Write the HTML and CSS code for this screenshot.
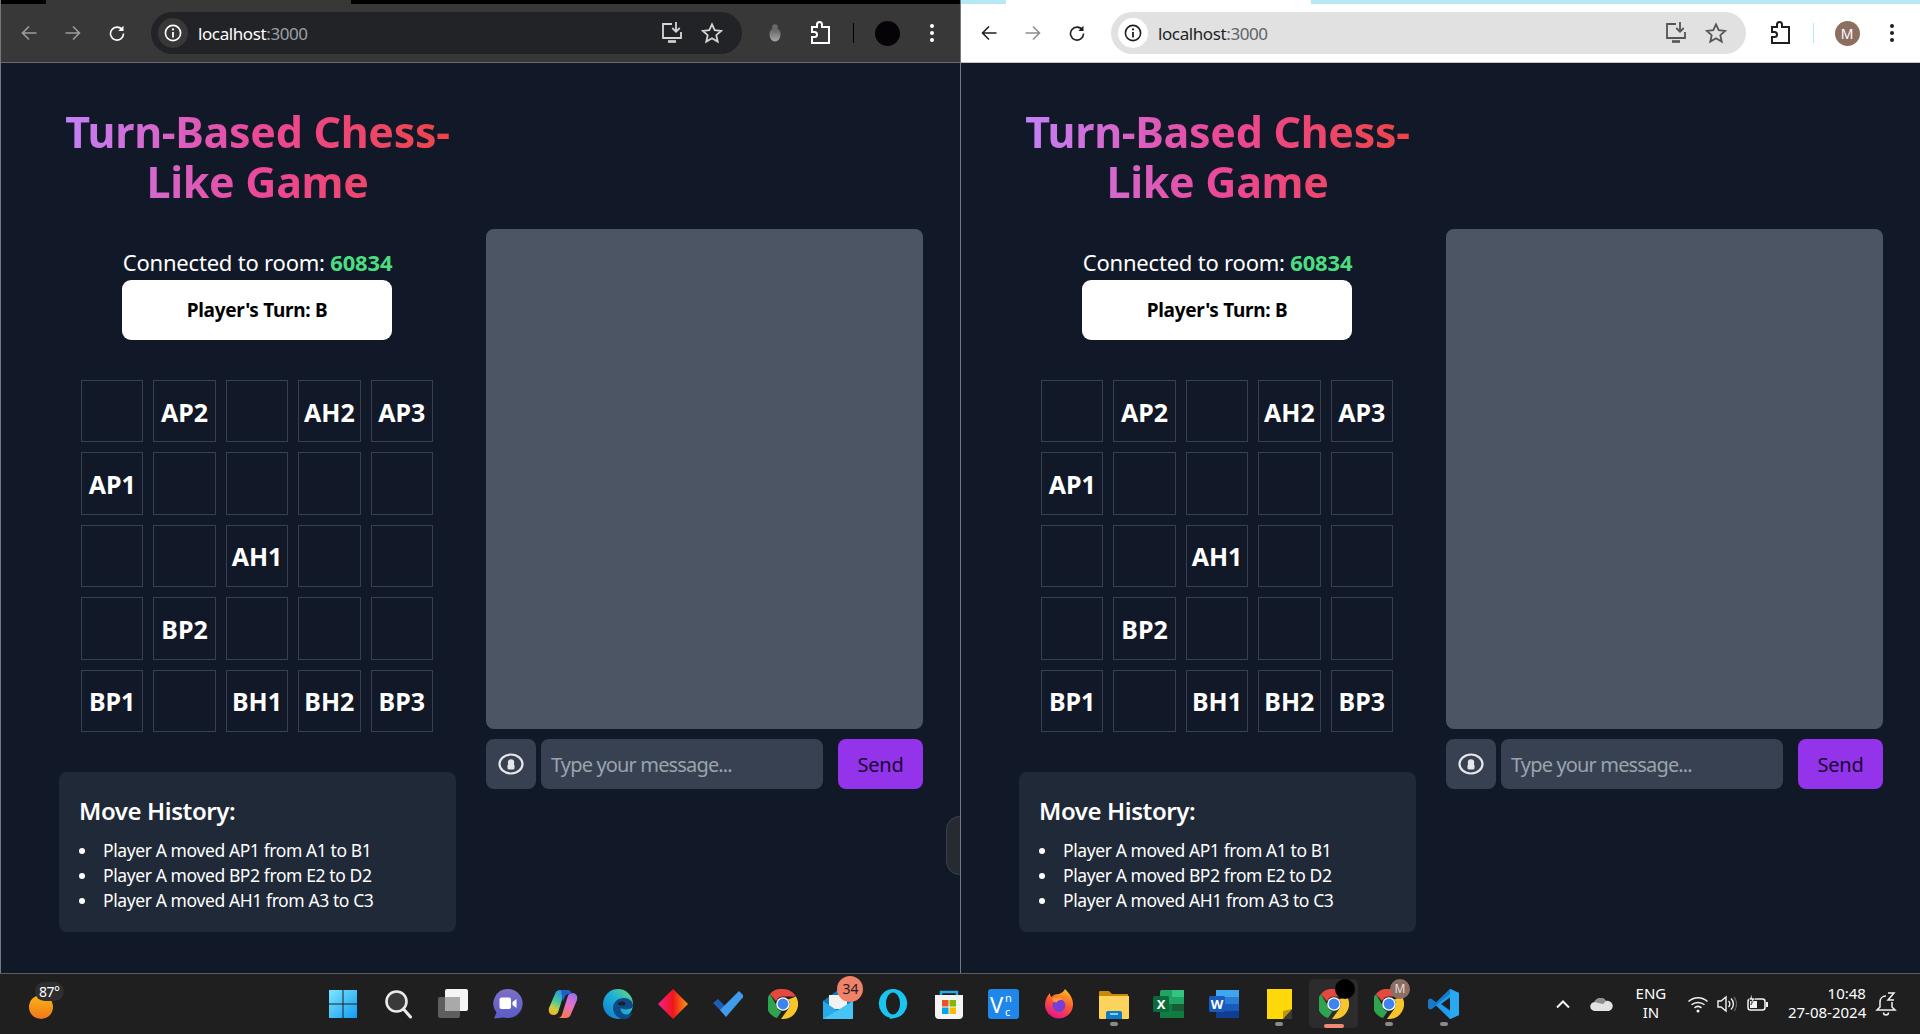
FILE: index.html
```html
<!DOCTYPE html>
<html lang="en">
<head>
  <meta charset="UTF-8">
  <title>Turn-Based Chess-Like Game</title>
  <link rel="stylesheet" href="styles.css">
</head>
<body>

<!-- shared icons -->
<svg class="sprite" width="0" height="0">
  <defs>
    <symbol id="i-back" viewBox="0 0 16 16"><path d="M15.5 8H1.5M8 1.5L1.5 8 8 14.5" fill="none" stroke="currentColor" stroke-width="1.6"/></symbol>
    <symbol id="i-forward" viewBox="0 0 16 16"><path d="M.5 8h14M8 1.5L14.500 8 8 14.500" fill="none" stroke="currentColor" stroke-width="1.6"/></symbol>
    <symbol id="i-reload" viewBox="0 0 16 16"><path d="M13.400 5A6.500 6.500 0 1 0 14.500 8.500" fill="none" stroke="currentColor" stroke-width="1.6"/><path d="M14.500 .8V6H9.300z" fill="currentColor"/></symbol>
    <symbol id="i-info" viewBox="0 0 20 20"><circle cx="10" cy="10" r="7.600" fill="none" stroke="currentColor" stroke-width="1.600"/><path d="M10 9v5.500" stroke="currentColor" stroke-width="1.800"/><circle cx="10" cy="6.400" r="1.100" fill="currentColor"/></symbol>
    <symbol id="i-install" viewBox="0 0 22 24"><path d="M11 3H2v14h18v-6" fill="none" stroke="currentColor" stroke-width="1.800"/><path d="M7 20.500h8" stroke="currentColor" stroke-width="2.600"/><path d="M15 1v9M11.300 7l3.700 3.800L18.700 7" fill="none" stroke="currentColor" stroke-width="1.800"/></symbol>
    <symbol id="i-star" viewBox="0 0 22 22"><path d="M11 2.300l2.700 5.900 6.400.7-4.800 4.300 1.400 6.400-5.700-3.300-5.700 3.300 1.400-6.400L1.900 8.900l6.400-.7z" fill="none" stroke="currentColor" stroke-width="1.800"/></symbol>
    <symbol id="i-ext" viewBox="-1 0 22 26"><path d="M2 7h5V4.500a2.500 2.500 0 0 1 5 0V7h7v16H2v-6h2.500a2.500 2.500 0 0 0 0-5H2z" fill="none" stroke="currentColor" stroke-width="2"/></symbol>
    <symbol id="i-menu" viewBox="0 0 6 20"><circle cx="3" cy="3" r="2"/><circle cx="3" cy="10" r="2"/><circle cx="3" cy="17" r="2"/></symbol>
    <symbol id="i-chrome" viewBox="0 0 30 30">
      <path d="M15 0a15 15 0 0 1 13 7.500H15a7.500 7.500 0 0 0-7 4.800L2 4.900A15 15 0 0 1 15 0z" fill="#e5483d"/>
      <path d="M2 4.900l6.400 11.400a7.500 7.500 0 0 0 5 6.100L9 29A15 15 0 0 1 2 4.900z" fill="#2fa44f"/>
      <path d="M28 7.500A15 15 0 0 1 15 30h-2l6.800-9.500a7.500 7.500 0 0 0 .4-10z" fill="#f8c52b"/>
      <circle cx="15" cy="15" r="6.800" fill="#fff"/><circle cx="15" cy="15" r="5.400" fill="#3d84ee"/>
    </symbol>
  </defs>
</svg>

<div class="desktop">

  <!-- left window (dark chrome theme) -->
  <section class="window dark">
    <div class="tabstrip"><div class="tab"></div></div>
    <div class="toolbar">
      <button class="tool-btn dim"><svg width="16" height="16"><use href="#i-back"/></svg></button>
      <button class="tool-btn dim"><svg width="16" height="16"><use href="#i-forward"/></svg></button>
      <button class="tool-btn"><svg width="16" height="16"><use href="#i-reload"/></svg></button>
      <div class="omnibox">
        <span class="info-chip"><svg width="20" height="20"><use href="#i-info"/></svg></span>
        <span class="url">localhost<span class="url-port">:3000</span></span>
        <span class="omni-icons">
          <svg width="22" height="24"><use href="#i-install"/></svg>
          <svg width="22" height="22"><use href="#i-star"/></svg>
        </span>
      </div>
      <button class="tool-btn bug-btn"><svg width="14" height="18" viewBox="0 0 14 18"><defs><linearGradient id="bug" x1="0" y1="0" x2="0" y2="1"><stop offset="0" stop-color="#5a5a5a"/><stop offset="1" stop-color="#a8a8a8"/></linearGradient></defs><ellipse cx="7" cy="10.500" rx="5.500" ry="7" fill="url(#bug)"/><circle cx="7" cy="3" r="2.800" fill="#6a6a6a"/></svg></button>
      <button class="tool-btn"><svg width="22" height="26"><use href="#i-ext"/></svg></button>
      <span class="divider"></span>
      <button class="tool-btn avatar-btn"><span class="avatar"></span></button>
      <button class="tool-btn"><svg class="menu-icon" width="6" height="20"><use href="#i-menu"/></svg></button>
    </div>
    <div class="page">
      <div class="game-col">
        <h1 class="title">Turn-Based Chess-Like Game</h1>
        <p class="room">Connected to room: <strong>60834</strong></p>
        <div class="turn">Player's Turn: B</div>
        <div class="board">
          <div class="cell"></div><div class="cell">AP2</div><div class="cell"></div><div class="cell">AH2</div><div class="cell">AP3</div>
          <div class="cell">AP1</div><div class="cell"></div><div class="cell"></div><div class="cell"></div><div class="cell"></div>
          <div class="cell"></div><div class="cell"></div><div class="cell">AH1</div><div class="cell"></div><div class="cell"></div>
          <div class="cell"></div><div class="cell">BP2</div><div class="cell"></div><div class="cell"></div><div class="cell"></div>
          <div class="cell">BP1</div><div class="cell"></div><div class="cell">BH1</div><div class="cell">BH2</div><div class="cell">BP3</div>
        </div>
        <div class="history">
          <h2>Move History:</h2>
          <ul>
            <li>Player A moved AP1 from A1 to B1</li>
            <li>Player A moved BP2 from E2 to D2</li>
            <li>Player A moved AH1 from A3 to C3</li>
          </ul>
        </div>
      </div>
      <div class="chat-col">
        <div class="chat-box"></div>
        <div class="chat-form">
          <button class="eye-btn"><svg width="26" height="22" viewBox="0 0 26 22"><ellipse cx="13" cy="11" rx="11.500" ry="9.500" fill="none" stroke="#e5e7eb" stroke-width="2.200"/><circle cx="13" cy="9.500" r="3.200" fill="#e5e7eb"/><rect x="9.500" y="11" width="7" height="5.500" rx="1.500" fill="#e5e7eb"/></svg></button>
          <input class="chat-input" type="text" placeholder="Type your message...">
          <button class="send-btn">Send</button>
        </div>
      </div>
    </div>
    <div class="side-handle"></div>
  </section>

  <!-- right window (light chrome theme) -->
  <section class="window light">
    <div class="tabstrip"><div class="tab"></div></div>
    <div class="toolbar">
      <button class="tool-btn"><svg width="16" height="16"><use href="#i-back"/></svg></button>
      <button class="tool-btn dim"><svg width="16" height="16"><use href="#i-forward"/></svg></button>
      <button class="tool-btn"><svg width="16" height="16"><use href="#i-reload"/></svg></button>
      <div class="omnibox">
        <span class="info-chip"><svg width="20" height="20"><use href="#i-info"/></svg></span>
        <span class="url">localhost<span class="url-port">:3000</span></span>
        <span class="omni-icons">
          <svg width="22" height="24"><use href="#i-install"/></svg>
          <svg width="22" height="22"><use href="#i-star"/></svg>
        </span>
      </div>
      <button class="tool-btn"><svg width="22" height="26"><use href="#i-ext"/></svg></button>
      <span class="divider"></span>
      <button class="tool-btn avatar-btn"><span class="avatar">M</span></button>
      <button class="tool-btn"><svg class="menu-icon" width="6" height="20"><use href="#i-menu"/></svg></button>
    </div>
    <div class="page">
      <div class="game-col">
        <h1 class="title">Turn-Based Chess-Like Game</h1>
        <p class="room">Connected to room: <strong>60834</strong></p>
        <div class="turn">Player's Turn: B</div>
        <div class="board">
          <div class="cell"></div><div class="cell">AP2</div><div class="cell"></div><div class="cell">AH2</div><div class="cell">AP3</div>
          <div class="cell">AP1</div><div class="cell"></div><div class="cell"></div><div class="cell"></div><div class="cell"></div>
          <div class="cell"></div><div class="cell"></div><div class="cell">AH1</div><div class="cell"></div><div class="cell"></div>
          <div class="cell"></div><div class="cell">BP2</div><div class="cell"></div><div class="cell"></div><div class="cell"></div>
          <div class="cell">BP1</div><div class="cell"></div><div class="cell">BH1</div><div class="cell">BH2</div><div class="cell">BP3</div>
        </div>
        <div class="history">
          <h2>Move History:</h2>
          <ul>
            <li>Player A moved AP1 from A1 to B1</li>
            <li>Player A moved BP2 from E2 to D2</li>
            <li>Player A moved AH1 from A3 to C3</li>
          </ul>
        </div>
      </div>
      <div class="chat-col">
        <div class="chat-box"></div>
        <div class="chat-form">
          <button class="eye-btn"><svg width="26" height="22" viewBox="0 0 26 22"><ellipse cx="13" cy="11" rx="11.500" ry="9.500" fill="none" stroke="#e5e7eb" stroke-width="2.200"/><circle cx="13" cy="9.500" r="3.200" fill="#e5e7eb"/><rect x="9.500" y="11" width="7" height="5.500" rx="1.500" fill="#e5e7eb"/></svg></button>
          <input class="chat-input" type="text" placeholder="Type your message...">
          <button class="send-btn">Send</button>
        </div>
      </div>
    </div>
  </section>
</div>

<footer class="taskbar">
  <div class="weather">
    <svg width="24" height="24" viewBox="0 0 24 24"><defs><linearGradient id="sun" x1="0" y1="0" x2="0" y2="1"><stop offset="0" stop-color="#fbb516"/><stop offset="1" stop-color="#f0761a"/></linearGradient></defs><circle cx="12" cy="12" r="12" fill="url(#sun)"/></svg>
    <span class="temp">87°</span>
  </div>

  <div class="apps">
    <!-- start -->
    <div class="app"><svg width="30" height="30" viewBox="0 0 30 30"><defs><linearGradient id="win" x1="0" y1="0" x2="1" y2="1"><stop offset="0" stop-color="#7fe6fb"/><stop offset="1" stop-color="#0f9cf5"/></linearGradient></defs><path d="M1 1h13.500v13.500H1zM15.500 1H29v13.500H15.500zM1 15.500h13.500V29H1zM15.500 15.500H29V29H15.500z" fill="url(#win)"/></svg></div>
    <!-- search -->
    <div class="app"><svg width="30" height="30" viewBox="0 0 30 30"><circle cx="13.500" cy="12.500" r="10" fill="#3a3a3a" stroke="#eaeaea" stroke-width="2.600"/><path d="M20.500 20l7 8" stroke="#eaeaea" stroke-width="3" stroke-linecap="round"/></svg></div>
    <!-- task view -->
    <div class="app"><svg width="30" height="30" viewBox="0 0 30 30"><rect x="0" y="8" width="22" height="21" rx="2" fill="#5e5e5e"/><rect x="7" y="0" width="23" height="22" rx="2" fill="#f4f4f4"/><rect x="7" y="8" width="15" height="14" fill="#a9a9a9"/></svg></div>
    <!-- meet -->
    <div class="app"><svg width="30" height="30" viewBox="0 0 30 30"><defs><linearGradient id="meet" x1="0" y1="0" x2="0" y2="1"><stop offset="0" stop-color="#7d6fc4"/><stop offset="1" stop-color="#5a5cc8"/></linearGradient></defs><path d="M15 0a14.500 14.500 0 1 1-4 28.400L1 29.500l2.500-6A14.500 14.500 0 0 1 15 0z" fill="url(#meet)"/><rect x="6.500" y="8.500" width="11.500" height="11.500" rx="2" fill="#fff"/><path d="M19.500 13l4-3v9l-4-3z" fill="#fff"/></svg></div>
    <!-- copilot -->
    <div class="app"><svg width="30" height="30" viewBox="0 0 30 30"><defs><linearGradient id="cop1" x1=".6" y1="0" x2=".2" y2="1"><stop offset="0" stop-color="#2a8fe8"/><stop offset=".45" stop-color="#46c8a0"/><stop offset=".75" stop-color="#c8d040"/><stop offset="1" stop-color="#f8b020"/></linearGradient><linearGradient id="cop2" x1=".6" y1="0" x2=".2" y2="1"><stop offset="0" stop-color="#f57a50"/><stop offset=".5" stop-color="#e870c8"/><stop offset="1" stop-color="#9a70f0"/></linearGradient></defs><path d="M12 1h8c-2.500 0-3.500 2-4.200 4L10.500 22c-.7 2.500-2.500 4-5 4C2 26 0 23 1 19L7 5c.8-2.500 2.500-4 5-4z" fill="url(#cop1)"/><path d="M12 1h8c-2.500 0-3.500 2-4.200 4L10.500 22c-.7 2.500-2.500 4-5 4C2 26 0 23 1 19L7 5c.8-2.500 2.500-4 5-4z" fill="url(#cop2)" transform="rotate(180 15 15)"/><path d="M13 1h7c2 0 3.500 2 4 4h-3c-3 0-4 2-5 5l-1 2.500z" fill="#1f5fc8"/></svg></div>
    <!-- edge -->
    <div class="app"><svg width="30" height="30" viewBox="0 0 30 30"><defs><linearGradient id="edge" x1="1" y1="0" x2="0" y2="1"><stop offset="0" stop-color="#6fdc6a"/><stop offset=".45" stop-color="#1fb0d8"/><stop offset="1" stop-color="#0f78c8"/></linearGradient></defs><circle cx="15" cy="15" r="15" fill="url(#edge)"/><path d="M30 17c0-5-4-8-9-8-6 0-11 4-11 10 0 6 5 11 11 11 4 0 7-2 8-6-3 2-7 2-9 .500-2-1.500-3-3.500-2-5.500 2 1.500 5 1.800 8 1 2-.5 4-1.500 4-3z" fill="#0d4a8a"/><path d="M19 12.500c2.500 0 4 1.200 3.500 2.800-.5 1-2.500 1.400-4.500 1.200-2-.2-3-1-3-2 0-1.200 2-2 4-2z" fill="#1f1f1f"/></svg></div>
    <!-- diamond app -->
    <div class="app"><svg width="30" height="30" viewBox="0 0 30 30"><defs><linearGradient id="dia" x1="0" y1="0" x2="1" y2="0"><stop offset="0" stop-color="#f5208e"/><stop offset=".5" stop-color="#f0151a"/><stop offset="1" stop-color="#fa9a10"/></linearGradient></defs><path d="M15 0l15 15-15 15L0 15z" fill="url(#dia)"/></svg></div>
    <!-- to do -->
    <div class="app"><svg width="30" height="30" viewBox="0 0 30 30"><path d="M0 14l5-4 9 9-4 5z" fill="#1c5fb8"/><path d="M26 2l5 5-18 21-6-7z" fill="#3f9bec"/></svg></div>
    <!-- chrome -->
    <div class="app"><svg width="30" height="30"><use href="#i-chrome"/></svg></div>
    <!-- mail -->
    <div class="app"><svg width="30" height="30" viewBox="0 0 30 30"><path d="M0 12L15 1l15 11v18H0z" fill="#0f75bd"/><path d="M6 6h18v14H6z" fill="#f2f2f2"/><path d="M0 12l15 10 15-10v18H0z" fill="#2aa9ea"/><path d="M30 12v18H0z" fill="#45c4f5"/></svg><span class="badge">34</span></div>
    <!-- alexa -->
    <div class="app"><svg width="30" height="30" viewBox="0 0 30 30"><path fill-rule="evenodd" d="M15 0a14 14.500 0 0 1 3 28.700L12 30v-1.300A14 14.500 0 0 1 15 0zm0 3.500c-4 0-7 5-7 11s3 11 7 11 7-5 7-11-3-11-7-11z" fill="#19c4f0"/></svg></div>
    <!-- store -->
    <div class="app"><svg width="30" height="30" viewBox="0 0 30 30"><path d="M7 8V3h16v5" fill="none" stroke="#2aa9ea" stroke-width="2.400"/><path d="M1 6h28v20a4 4 0 0 1-4 4H5a4 4 0 0 1-4-4z" fill="#f4f4f4"/><rect x="8" y="11" width="6.500" height="6.500" fill="#f25022"/><rect x="15.500" y="11" width="6.500" height="6.500" fill="#7fba00"/><rect x="8" y="18.500" width="6.500" height="6.500" fill="#00a4ef"/><rect x="15.500" y="18.500" width="6.500" height="6.500" fill="#ffb900"/></svg></div>
    <!-- vnc -->
    <div class="app"><svg width="31" height="30" viewBox="0 0 31 30"><rect width="31" height="30" rx="3" fill="#1f86ea"/><text x="2" y="24" class="vnc-v">V</text><text x="17" y="12.500" class="vnc-s">n</text><text x="17" y="27" class="vnc-s">c</text></svg></div>
    <!-- firefox -->
    <div class="app"><svg width="30" height="30" viewBox="0 0 30 30"><defs><linearGradient id="fx" x1=".8" y1="0" x2=".4" y2="1"><stop offset="0" stop-color="#ffc21f"/><stop offset=".5" stop-color="#ff5a2d"/><stop offset="1" stop-color="#e31587"/></linearGradient></defs><path d="M15 5c3-1 5-3 6-5 3 3 8 8 8 15a14 14 0 0 1-28 1C1 11 3 7 6 4c0 2 .5 3 1.500 4 1.500-2 4-3 7.500-3z" fill="url(#fx)"/><circle cx="15" cy="16.500" r="6.500" fill="#7a3ed8"/><path d="M8 10c3-2 8-2 11 1-3-.5-5 .500-6.500 2.500-2 0-4-1.500-4.500-3.500z" fill="#ff9a3c"/></svg></div>
    <!-- explorer -->
    <div class="app running"><svg width="30" height="30" viewBox="0 0 30 30"><path d="M0 3a1 1 0 0 1 1-1h9l3 3h16v5H0z" fill="#c98a0c"/><path d="M0 7h30v22a1 1 0 0 1-1 1H1a1 1 0 0 1-1-1z" fill="#fcd35b"/><path d="M7 24a2 2 0 0 1 2-2h12a2 2 0 0 1 2 2v6H7z" fill="#0f7ac8"/><rect x="11" y="24" width="8" height="2" fill="#7fd0f5"/></svg></div>
    <!-- excel -->
    <div class="app"><svg width="31" height="30" viewBox="0 0 31 30"><rect x="7" y="1" width="24" height="28" rx="1.500" fill="#21a366"/><rect x="19" y="1" width="12" height="7" fill="#33c481"/><rect x="7" y="15" width="24" height="14" fill="#107c41"/><rect x="19" y="15" width="12" height="7" fill="#185c37"/><rect y="7" width="16" height="16" rx="1.500" fill="#0b6a3a"/><text x="8" y="20" class="tile-letter">X</text></svg></div>
    <!-- word -->
    <div class="app"><svg width="30" height="30" viewBox="0 0 30 30"><rect x="7" y="1" width="23" height="28" rx="1.500" fill="#2b7cd3"/><rect x="7" y="1" width="23" height="7" fill="#41a5ee"/><rect x="7" y="15" width="23" height="7" fill="#185abd"/><rect x="7" y="22" width="23" height="7" fill="#103f91"/><rect y="7" width="16" height="16" rx="1.500" fill="#185abd"/><text x="8" y="20" class="tile-letter">W</text></svg></div>
    <!-- sticky notes -->
    <div class="app running"><svg width="30" height="30" viewBox="0 0 30 30"><path d="M3 0h25v20l-9 10H3z" fill="#ffd80a"/><path d="M28 20v10H19z" fill="#3a3a3a"/><path d="M19 30v-8l9-2z" fill="#b89a08"/></svg></div>
    <!-- chrome, focused window -->
    <div class="app running active"><svg width="30" height="30"><use href="#i-chrome"/></svg><span class="profile black"></span></div>
    <!-- chrome, second profile -->
    <div class="app running"><svg width="30" height="30"><use href="#i-chrome"/></svg><span class="profile">M</span></div>
    <!-- vs code -->
    <div class="app running"><svg width="31" height="30" viewBox="0 0 31 30"><path d="M22 0l9 4v22l-9 4L8 16.500l-5 4-3-1.500V11l3-1.500 5 4zm0 8.500L13 15l9 6.500z" fill="#1f9cf0"/><path d="M22 0l9 4v22l-9 4z" fill="#29a9f2"/><path d="M0 19l3 1.500L22 5V0L8 13.500 3 9.500 0 11z" fill="#0f6cb8" opacity=".7"/></svg></div>
  </div>

  <div class="tray">
    <svg class="tray-chevron" width="20" height="12" viewBox="0 0 20 12"><path d="M4 9.500l6-6 6 6" fill="none" stroke="#f2f2f2" stroke-width="2"/></svg>
    <svg class="tray-cloud" width="24" height="14" viewBox="0 0 24 14"><path d="M5 14a4.500 4.500 0 0 1-.5-9A6.500 6.500 0 0 1 16 4a5 5 0 0 1 3 10z" fill="#e2e2e2"/><path d="M4.500 5A6.500 6.500 0 0 1 16 4l-3 3c-3-1-6-1-8.500-2z" fill="#8f8f8f"/></svg>
    <div class="lang">ENG<br>IN</div>
    <svg class="tray-wifi" width="22" height="18" viewBox="0 0 22 18"><path d="M1.500 6.500a14 14 0 0 1 19 0M4.500 9.800a10 10 0 0 1 13 0M7.500 12.800a5.500 5.500 0 0 1 7 0" fill="none" stroke="#f2f2f2" stroke-width="1.500"/><circle cx="11" cy="16" r="1.500" fill="#f2f2f2"/></svg>
    <svg class="tray-vol" width="20" height="18" viewBox="0 0 20 18"><path d="M1 6h3l5-4v14l-5-4H1z" fill="none" stroke="#f2f2f2" stroke-width="1.400"/><path d="M11.500 6a4 4 0 0 1 0 6M14 3.500a7.500 7.500 0 0 1 0 11" fill="none" stroke="#f2f2f2" stroke-width="1.400"/><path d="M17 2a11 11 0 0 1 0 14" fill="none" stroke="#666" stroke-width="1.200"/></svg>
    <svg class="tray-batt" width="22" height="20" viewBox="0 0 22 20"><rect x="1" y="5" width="17" height="11" rx="2.500" fill="none" stroke="#f2f2f2" stroke-width="1.500"/><rect x="19" y="8" width="2" height="5" fill="#f2f2f2"/><rect x="3" y="7" width="7" height="7" fill="#f2f2f2"/><path d="M5 0L2 6h3l-1 5 4-7H5z" fill="#f2f2f2" stroke="#1f1f1f" stroke-width=".6"/></svg>
    <div class="clock">10:48<br>27-08-2024</div>
    <svg class="tray-bell" width="22" height="24" viewBox="0 0 22 24"><path d="M11 4c-4 0-6 3-6 6v5l-3 3h18l-3-3V10" fill="none" stroke="#f2f2f2" stroke-width="1.500"/><path d="M8.500 20.500a2.500 2.500 0 0 0 5 0" fill="none" stroke="#f2f2f2" stroke-width="1.500"/><path d="M13 1h6l-6 7h6" fill="none" stroke="#f2f2f2" stroke-width="1.500"/></svg>
  </div>
</footer>

</body>
</html>
```

FILE: styles.css
```css
* {
  box-sizing: border-box;
}
body {
  margin: 0;
  height: 1034px;
  overflow: hidden;
  display: flex;
  flex-direction: column;
  font-family: "Noto Sans", sans-serif;
  background-color: #111827;
}
button {
  font-family: inherit;
  border: none;
  padding: 0;
  background: none;
}
.sprite {
  position: absolute;
}
.desktop {
  display: flex;
  height: 973px;
}

/* browser window */
.window {
  position: relative;
  width: 960px;
  display: flex;
  flex-direction: column;
  border-left: 1px solid #74777c;
  background-color: #111827;
}
.tabstrip {
  height: 4px;
  display: flex;
}
.tab {
  width: 305px;
  margin-left: 45px;
}
.toolbar {
  height: 59px;
  display: flex;
  align-items: center;
  padding: 0 6px 0 6px;
  border-bottom: 1px solid;
}
.tool-btn {
  width: 44px;
  height: 44px;
  flex: none;
  display: flex;
  align-items: center;
  justify-content: center;
  color: inherit;
}
.tool-btn.dim {
  opacity: 0.5;
}
.avatar-btn {
  margin-right: 1px;
}
.omnibox {
  flex: 1;
  height: 42px;
  margin: 0 12px;
  border-radius: 21px;
  display: flex;
  align-items: center;
  padding: 0 19px 0 7px;
}
.bug-btn {
  margin: 0 1px 0 -1px;
}
.info-chip {
  width: 30px;
  height: 30px;
  border-radius: 50%;
  display: flex;
  align-items: center;
  justify-content: center;
}
.url {
  margin-left: 10px;
  font-size: 17px;
  letter-spacing: -0.4px;
}
.omni-icons {
  margin-left: auto;
  display: flex;
  align-items: center;
  gap: 18px;
}
.divider {
  width: 1px;
  height: 20px;
  margin: 0 11px;
}
.avatar {
  width: 25px;
  height: 25px;
  border-radius: 50%;
  display: flex;
  align-items: center;
  justify-content: center;
  font-size: 14px;
  color: #fff;
}
.menu-icon {
  fill: currentColor;
}

.dark .tabstrip {
  background-color: #000;
}
.dark .tab,
.dark .toolbar {
  background-color: #383838;
}
.dark .toolbar {
  color: #fff;
  border-bottom-color: #6b6b6b;
}
.dark .omnibox {
  background-color: #222326;
}
.dark .info-chip {
  background-color: #383838;
}
.dark .url {
  color: #fff;
}
.dark .url-port {
  color: #9aa0a6;
}
.dark .omni-icons {
  color: #d6d6d6;
}
.dark .divider {
  background-color: #000;
}
.dark .avatar {
  background-color: #050308;
}

.light .tabstrip {
  background-color: #b7e8f5;
}
.light .tab,
.light .toolbar {
  background-color: #fff;
}
.light .toolbar {
  color: #1f1f1f;
  border-bottom-color: #c4c7c5;
}
.light .omnibox {
  background-color: #e1e1e1;
}
.light .info-chip {
  background-color: #fff;
}
.light .url {
  color: #1f1f1f;
}
.light .url-port {
  color: #5f6368;
}
.light .omni-icons {
  color: #555;
}
.light .divider {
  background-color: #b7e8f5;
}
.light .avatar {
  background-color: #8d6e63;
}

/* game page */
.page {
  flex: 1;
  display: flex;
  gap: 30px;
  padding: 45px 0 0 58px;
}
.game-col {
  width: 397px;
  display: flex;
  flex-direction: column;
  align-items: center;
}
.title {
  margin: -1px 0 40px;
  width: 100%;
  font-size: 43px;
  line-height: 50px;
  font-weight: 700;
  letter-spacing: -0.3px;
  text-align: center;
  color: transparent;
  background: linear-gradient(to right, #c084fc, #ec4899, #ef4444);
  -webkit-background-clip: text;
  background-clip: text;
}
.room {
  margin: 0;
  padding-bottom: 3px;
  font-size: 22px;
  line-height: 30px;
  letter-spacing: -0.2px;
  color: #fff;
}
.room strong {
  color: #4ade80;
  font-weight: 700;
}
.turn {
  width: 270px;
  height: 60px;
  margin-right: 1px;
  border-radius: 9px;
  background-color: #fff;
  color: #000;
  font-size: 19px;
  font-weight: 700;
  letter-spacing: -0.3px;
  display: flex;
  align-items: center;
  justify-content: center;
}
.board {
  margin: 40px 1px 0 0;
  width: 352px;
  display: grid;
  grid-template-columns: repeat(5, 1fr);
  grid-auto-rows: 62.4px;
  gap: 10px;
}
.cell {
  border: 1px solid #374151;
  padding-top: 1px;
  display: flex;
  align-items: center;
  justify-content: center;
  color: #fff;
  font-size: 25px;
  font-weight: 700;
}
.history {
  margin-top: 40px;
  width: 100%;
  height: 160px;
  padding: 23px 20px 0;
  border-radius: 8px;
  background-color: #1f2937;
  color: #fff;
}
.history h2 {
  margin: 0 0 11px;
  font-size: 24px;
  line-height: 32px;
  font-weight: 600;
  letter-spacing: -0.4px;
}
.history ul {
  margin: 0;
  padding-left: 24px;
  list-style: none;
}
.history li {
  position: relative;
  font-size: 17.5px;
  line-height: 25px;
  letter-spacing: -0.4px;
}
.history li::before {
  content: "";
  position: absolute;
  left: -24px;
  top: 10px;
  width: 6px;
  height: 6px;
  border-radius: 50%;
  background-color: #fff;
}

/* chat */
.chat-col {
  width: 437px;
  padding-top: 121px;
}
.chat-box {
  height: 500px;
  border-radius: 8px;
  background-color: #4b5563;
}
.chat-form {
  margin-top: 10px;
  height: 50px;
  display: flex;
}
.eye-btn {
  width: 50px;
  border-radius: 8px;
  background-color: #374151;
  display: flex;
  align-items: center;
  justify-content: center;
}
.chat-input {
  width: 282px;
  margin-left: 5px;
  padding: 0 10px;
  border: none;
  border-radius: 8px;
  background-color: #374151;
  color: #fff;
  font-family: inherit;
  font-size: 20px;
  letter-spacing: -0.85px;
}
.chat-input::placeholder {
  color: #9ca3af;
}
.send-btn {
  width: 85px;
  margin-left: 15px;
  border-radius: 8px;
  background-color: #9333ea;
  color: #16082e;
  font-size: 20px;
  letter-spacing: -0.2px;
}
.side-handle {
  position: absolute;
  right: 0;
  top: 816px;
  width: 14px;
  height: 59px;
  border: 1px solid #3a3f45;
  border-right: none;
  border-radius: 14px 0 0 14px;
  background-color: #262b31;
}

/* windows taskbar */
.taskbar {
  height: 61px;
  display: flex;
  align-items: center;
  border-top: 1px solid #5c5c5c;
  background-color: #1f1f1f;
  color: #fff;
}
.weather {
  position: relative;
  width: 37px;
  height: 30px;
  margin-left: 29px;
  padding-top: 6px;
  flex: none;
}
.temp {
  position: absolute;
  left: 6px;
  top: -7px;
  padding: 0 4px;
  border-radius: 10px;
  background-color: #2e2e2e;
  font-size: 14px;
  line-height: 19px;
  letter-spacing: -0.5px;
}
.apps {
  margin-left: 262px;
  display: flex;
  gap: 25.05px;
}
.app {
  position: relative;
  width: 30px;
  height: 30px;
  display: flex;
  justify-content: center;
}
.app svg {
  flex: none;
}
.app.running::after {
  content: "";
  position: absolute;
  left: 11px;
  bottom: -7px;
  width: 8px;
  height: 4px;
  border-radius: 2px;
  background-color: #8a8a8a;
}
.app.active::before {
  content: "";
  position: absolute;
  left: -10px;
  top: -10px;
  width: 49px;
  height: 49px;
  border-radius: 5px;
  background-color: #2c2c2c;
  z-index: 0;
}
.app.active svg {
  position: relative;
}
.app.active::after {
  left: 5px;
  bottom: -9px;
  width: 20px;
  background-color: #f08a70;
}
.badge {
  position: absolute;
  left: 14px;
  top: -13px;
  width: 26px;
  height: 26px;
  border-radius: 50%;
  background-color: #f0826a;
  color: #1f1f1f;
  font-size: 14px;
  line-height: 26px;
  text-align: center;
}
.profile {
  position: absolute;
  left: 16px;
  top: -10px;
  width: 20px;
  height: 20px;
  border-radius: 50%;
  background-color: #8d6e63;
  color: #e8dcd8;
  font-size: 12px;
  line-height: 20px;
  text-align: center;
}
.profile.black {
  background-color: #000;
}
.vnc-v {
  font-size: 22px;
  fill: #fff;
  font-family: "Noto Sans", sans-serif;
}
.vnc-s {
  font-size: 11px;
  fill: #fff;
  font-family: "Noto Sans", sans-serif;
}
.tile-letter {
  font-size: 13px;
  font-weight: 700;
  fill: #fff;
  text-anchor: middle;
  font-family: "Noto Sans", sans-serif;
}
.tray {
  margin-left: 94px;
  display: flex;
  align-items: center;
  font-size: 15px;
  line-height: 19px;
}
.lang {
  width: 40px;
  margin-left: 17px;
  padding-bottom: 2px;
  text-align: center;
}
.tray-cloud {
  margin-left: 17px;
}
.tray-wifi {
  margin-left: 16px;
}
.tray-vol {
  margin-left: 8px;
}
.tray-batt {
  margin-left: 10px;
}
.clock {
  width: 78px;
  margin-left: 19px;
  padding-bottom: 2px;
  text-align: right;
  white-space: nowrap;
}
.tray-bell {
  margin-left: 9px;
}
```
